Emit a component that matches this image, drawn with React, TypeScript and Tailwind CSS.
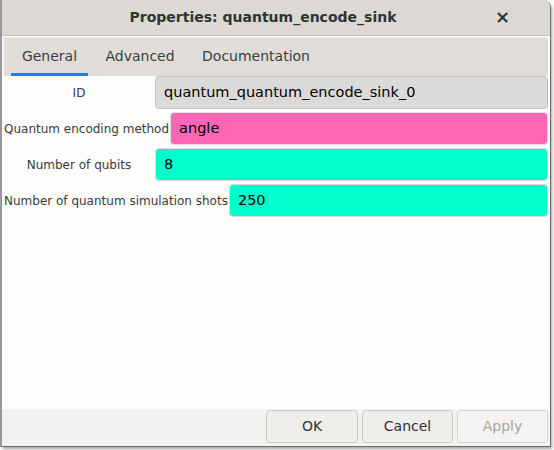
import React from 'react'

const rows = [
  { label: 'ID', value: 'quantum_quantum_encode_sink_0', bg: 'bg-[#dbdad8]', border: 'border-[#c6c3bf]' },
  { label: 'Quantum encoding method', value: 'angle', bg: 'bg-[#ff66b3]', border: 'border-[#e5e0dc]' },
  { label: 'Number of qubits', value: '8', bg: 'bg-[#00ffcc]', border: 'border-[#d9dcd8]' },
  { label: 'Number of quantum simulation shots', value: '250', bg: 'bg-[#00ffcc]', border: 'border-[#d9dcd8]' },
]

export default function App() {
  return (
    <div
      className="w-[554px] h-[450px] bg-[#fbfbf9] flex overflow-hidden"
      style={{ fontFamily: '"DejaVu Sans", Verdana, sans-serif' }}
    >
      {/* background canvas strip on the left */}
      <div className="w-[2px] bg-[#9d9aa0] h-[447px]" />
      <div className="flex flex-col w-[549px] h-[447px] bg-[#fdfdfb] border-r border-b border-[#6f6d6b] rounded-tr-[8px] overflow-hidden shadow-[1px_2px_3px_rgba(0,0,0,0.35)]">
        {/* title bar */}
        <div className="h-[36px] shrink-0 flex items-center bg-[#dcd8d3] border-b border-[#c4c0bb] relative">
          <div className="flex-1 text-center text-[14px] font-bold text-[#2e3436] pr-[26px]">
            Properties: quantum_encode_sink
          </div>
          <div className="absolute right-[40px] top-[8px] text-[18px] font-bold text-[#2e3436] leading-none">×</div>
        </div>

        {/* tabs */}
        <div className="h-[39px] shrink-0 flex items-end bg-[#e0ddd8] border-t border-l border-[#f4f3f1] ml-[1px] mr-[2px] mt-[1px] pl-[7px]">
          <div className="w-[77px] h-[36px] flex items-center justify-center text-[14px] text-[#3b3f41] border-b-[3px] border-[#2a7ddb]">
            General
          </div>
          <div className="w-[104px] h-[36px] flex items-center justify-center text-[14px] text-[#3b3f41] border-b-[3px] border-transparent">
            Advanced
          </div>
          <div className="w-[128px] h-[36px] flex items-center justify-center text-[14px] text-[#3b3f41] border-b-[3px] border-transparent">
            Documentation
          </div>
        </div>

        {/* form */}
        <div className="flex-1 flex flex-col gap-[3px] pl-[2px] pr-[2px] bg-[#fdfdfb]">
          {rows.map((r) => (
            <div key={r.label} className="flex items-stretch h-[33px]">
              <div className="min-w-[151px] flex items-center justify-center text-[12px] text-[#3a3a3a] whitespace-nowrap pr-[1px]">
                {r.label}
              </div>
              <div
                className={`flex-1 flex items-center pl-[8px] text-[14.5px] text-black rounded-[4px] border ${r.bg} ${r.border}`}
              >
                {r.value}
              </div>
            </div>
          ))}
        </div>

        {/* buttons */}
        <div className="h-[37px] shrink-0 bg-[#f3f2f0] flex items-start justify-end gap-[4px] pr-[2px] pt-[1px]">
          <button className="w-[92px] h-[33px] rounded-[4px] border border-[#cfc9c4] bg-[#f0eeeb] text-[14px] text-[#2e3436]">
            OK
          </button>
          <button className="w-[91px] h-[33px] rounded-[4px] border border-[#cfc9c4] bg-[#f0eeeb] text-[14px] text-[#2e3436]">
            Cancel
          </button>
          <button className="w-[91px] h-[33px] rounded-[4px] border border-[#d8d3ce] bg-[#f4f3f1] text-[14px] text-[#a4a5a3]">
            Apply
          </button>
        </div>
      </div>
    </div>
  )
}
